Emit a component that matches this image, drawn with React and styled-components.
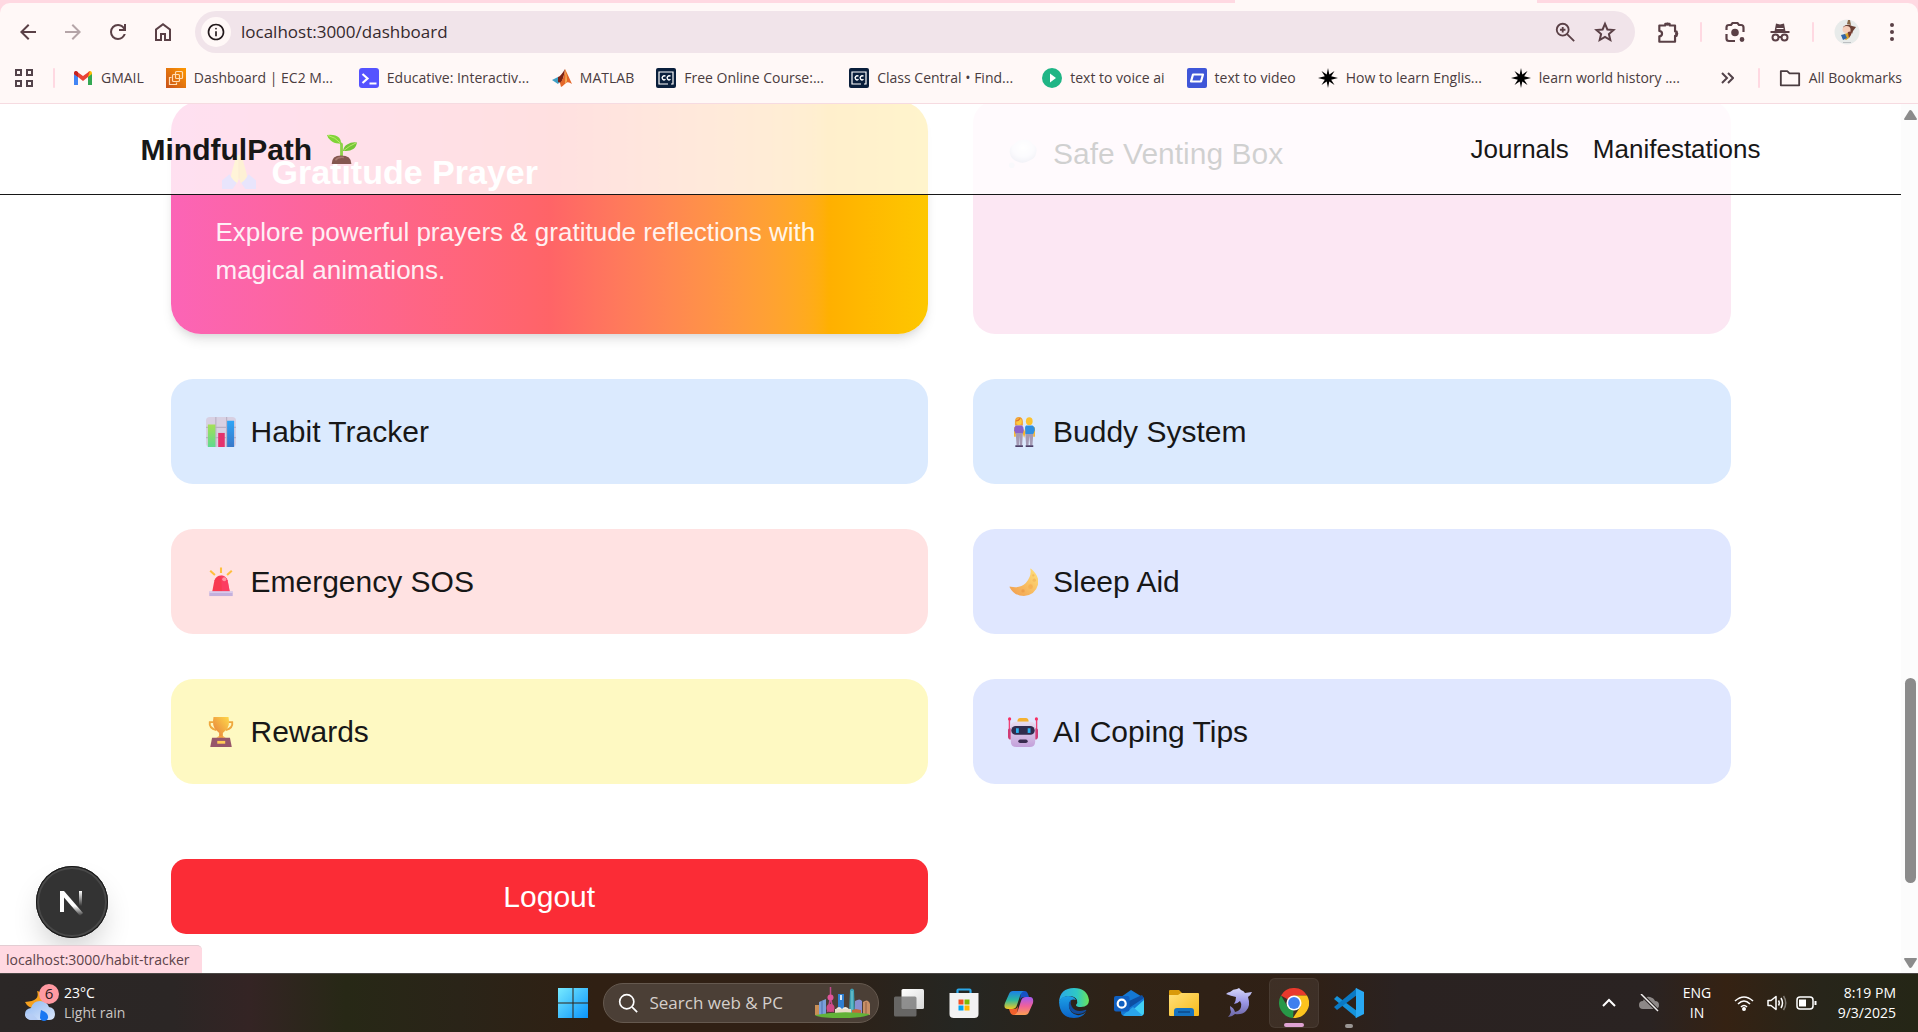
import styled, { createGlobalStyle, css } from 'styled-components';

const UI_FONT = "'Open Sans', 'Noto Sans', sans-serif";
const PAGE_FONT = "'Liberation Sans', Arial, sans-serif";
const CHROME_BG = '#fff8f7';
const CHROME_PINK = '#ffd9e2';
const CHROME_ICON = '#5a4046';
const INK = '#171717';

const GlobalStyle = createGlobalStyle`
  * {
    box-sizing: border-box;
  }
  body {
    margin: 0;
    overflow: hidden;
  }
  button, input {
    font: inherit;
    color: inherit;
    border: 0;
    padding: 0;
    margin: 0;
    background: none;
  }
  a {
    color: inherit;
    text-decoration: none;
  }
  svg {
    display: block;
    flex: none;
  }
`;

const Screen = styled.div`
  height: 100vh;
  display: flex;
  flex-direction: column;
  background: #fff;
`;

/* ---------- browser ---------- */

const BrowserHeader = styled.header`
  flex: none;
  background: ${CHROME_PINK};
  font-family: ${UI_FONT};
`;

const ActiveTab = styled.div`
  width: 302px;
  height: 3px;
  margin-left: 64.4%;
  background: ${CHROME_BG};
`;

const HeaderBody = styled.div`
  background: ${CHROME_BG};
  border-radius: 10px 10px 0 0;
  border-bottom: 1px solid #f6dbe1;
`;

const Toolbar = styled.div`
  display: flex;
  align-items: center;
  padding: 8px 4px 0 5px;
`;

const ToolButton = styled.button`
  width: ${(p) => p.$width || 45}px;
  height: 40px;
  display: flex;
  align-items: center;
  justify-content: center;
  color: ${(p) => (p.$dim ? '#b5a5a8' : CHROME_ICON)};
`;

const AddressBar = styled.div`
  flex: 1;
  height: 42px;
  margin: 0 10px;
  padding: 0 10px 0 6px;
  display: flex;
  align-items: center;
  border-radius: 21px;
  background: #f1e4ea;
`;

const SiteInfo = styled.button`
  width: 30px;
  height: 30px;
  display: flex;
  align-items: center;
  justify-content: center;
  border-radius: 50%;
  background: ${CHROME_BG};
  color: #22191b;
`;

const AddressInput = styled.input`
  flex: 1;
  min-width: 0;
  margin-left: 10px;
  font-size: 17px;
  line-height: 24px;
  color: #35292d;
  outline: none;
`;

const Separator = styled.span`
  flex: none;
  width: 2px;
  height: 20px;
  margin: 0 ${(p) => p.$space || 10}px;
  border-radius: 1px;
  background: ${CHROME_PINK};
`;

const BookmarkBar = styled.nav`
  height: 50px;
  display: flex;
  align-items: center;
  padding: 0 16px 0 12px;
  font-size: 14px;
  line-height: 20px;
  color: #4a3c40;
`;

const AppsButton = styled.button`
  width: 23px;
  height: 30px;
  display: flex;
  align-items: center;
  justify-content: center;
  color: #53434a;
`;

const Bookmark = styled.a`
  flex: none;
  display: flex;
  align-items: center;
  gap: 8px;
  white-space: nowrap;
  ${(p) => (p.$long ? css`width: 193px;` : css`padding-right: 22px;`)}
`;

const BarEnd = styled.div`
  margin-left: auto;
  display: flex;
  align-items: center;
`;

const AllBookmarks = styled.button`
  display: flex;
  align-items: center;
  gap: 8px;
  white-space: nowrap;
`;

/* ---------- page ---------- */

const Viewport = styled.div`
  position: relative;
  flex: 1;
  min-height: 0;
  display: flex;
  font-family: ${PAGE_FONT};
  color: ${INK};
`;

const Page = styled.div`
  position: relative;
  flex: 1;
  min-width: 0;
  overflow: hidden;
  display: flex;
  flex-direction: column;
  justify-content: flex-end;
`;

const SiteNav = styled.nav`
  position: absolute;
  top: 0;
  left: 0;
  right: 0;
  z-index: 10;
  background: rgba(255, 255, 255, 0.8);
  border-bottom: 1px solid ${INK};
`;

const NavInner = styled.div`
  max-width: 1680px;
  height: 90px;
  margin: 0 auto;
  padding: 0 30px;
  display: flex;
  align-items: center;
  justify-content: space-between;
`;

const Brand = styled.a`
  display: flex;
  align-items: center;
  gap: 10px;
  font-size: 30px;
  line-height: 45px;
  font-weight: 700;
`;

const NavLinks = styled.div`
  display: flex;
  gap: 24px;
  font-size: 26px;
  line-height: 38px;
`;

const Content = styled.main`
  width: 100%;
  max-width: 1680px;
  margin: 0 auto;
  padding: 0 60px 39px;
`;

const CardGrid = styled.div`
  display: grid;
  grid-template-columns: 1fr 1fr;
  gap: 45px;
`;

const Card = styled.a`
  display: flex;
  align-items: flex-start;
  gap: 10px;
  padding: 30px;
  border-radius: 22px;
  background: ${(p) => p.$bg};
  font-size: 30px;
  line-height: 45px;
`;

const PrayerCard = styled.a`
  display: block;
  padding: 45px;
  border-radius: 30px;
  color: #fff;
  background: linear-gradient(
    to right in oklab,
    oklch(71.8% 0.202 349.761),
    oklch(70.4% 0.191 22.216),
    oklch(85.2% 0.199 91.936)
  );
  box-shadow: 0 8px 12px -2px rgba(0, 0, 0, 0.1), 0 4px 8px -4px rgba(0, 0, 0, 0.1);
`;

const PrayerTitle = styled.h2`
  display: flex;
  align-items: center;
  gap: 10px;
  margin: 0 0 15px;
  font-size: 34px;
  line-height: 52px;
`;

const PrayerText = styled.p`
  margin: 0;
  font-size: 26px;
  line-height: 38px;
  opacity: 0.9;
`;

const EmojiBox = styled.span`
  flex: none;
  width: ${(p) => (p.$large ? 46 : 40)}px;
  height: ${(p) => (p.$large ? 52 : 45)}px;
  display: flex;
  align-items: center;
  justify-content: center;

  svg {
    width: ${(p) => (p.$large ? 34 : 30)}px;
    height: ${(p) => (p.$large ? 34 : 30)}px;
  }
`;

const LogoutButton = styled.button`
  margin-top: 30px;
  padding: 15px;
  border-radius: 15px;
  background: #fb2c36;
  color: #fff;
  font-size: 30px;
  line-height: 45px;
`;

const DevBadge = styled.button`
  position: absolute;
  left: 36px;
  bottom: 35px;
  z-index: 11;
  width: 72px;
  height: 72px;
  border-radius: 50%;
  background: #333;
  box-shadow: 0 0 0 1px #171717 inset, 0 0 0 3px #484848 inset, 0 16px 32px -8px rgba(0, 0, 0, 0.24);
  display: flex;
  align-items: center;
  justify-content: center;
`;

const StatusBubble = styled.div`
  position: absolute;
  left: 0;
  bottom: 0;
  z-index: 12;
  height: 28px;
  padding: 0 12px 0 6px;
  border-top: 1px solid #e3cdd3;
  border-top-right-radius: 5px;
  background: ${CHROME_PINK};
  color: #5c4349;
  font-family: ${UI_FONT};
  font-size: 14px;
  line-height: 27px;
`;

const ScrollBar = styled.div`
  flex: none;
  width: 17px;
  display: flex;
  flex-direction: column;
  align-items: center;
  padding: 6px 0 5px 2px;
  background: #fcfcfc;
`;

const ScrollSpace = styled.div`
  flex: ${(p) => p.$grow};
`;

const ScrollThumb = styled.div`
  flex: 205;
  width: 11px;
  border-radius: 6px;
  background: #8b8b8b;
`;

/* ---------- taskbar ---------- */

const Taskbar = styled.footer`
  flex: none;
  height: 59px;
  display: grid;
  grid-template-columns: 1fr auto 1fr;
  align-items: center;
  padding-left: 3px;
  border-top: 1px solid #4b4846;
  background: linear-gradient(
    to right,
    #2b2726 0%,
    #2b2625 9%,
    #342424 13%,
    #272816 18%,
    #2a2418 24%,
    #302013 31%,
    #302015 42%,
    #252622 50%,
    #2e2217 58%,
    #302015 68%,
    #2a2221 73%,
    #2a2322 86%,
    #352213 90%,
    #27251a 95%,
    #252616 100%
  );
  color: #fff;
  font-family: ${UI_FONT};
  font-size: 14px;
  line-height: 20px;
`;

const Weather = styled.button`
  justify-self: start;
  display: flex;
  align-items: center;
  gap: 4px;
  padding-left: 21px;
  text-align: left;
`;

const WeatherNote = styled.span`
  color: #c9c5c3;
`;

const Stack = styled.span`
  display: flex;
  flex-direction: column;
  text-align: ${(p) => p.$align || 'left'};
`;

const TaskCenter = styled.div`
  display: flex;
  align-items: center;
  gap: 5px;
`;

const TaskButton = styled.button`
  position: relative;
  width: 50px;
  height: 50px;
  display: flex;
  align-items: center;
  justify-content: center;
  border-radius: 6px;
  ${(p) =>
    p.$active &&
    css`
      background: rgba(255, 255, 255, 0.07);
      border: 1px solid rgba(255, 255, 255, 0.06);
    `}
`;

const RunMark = styled.span`
  position: absolute;
  bottom: 0;
  left: 50%;
  transform: translateX(-50%);
  width: ${(p) => (p.$active ? 20 : 8)}px;
  height: 4px;
  border-radius: 2px;
  background: ${(p) => (p.$active ? '#dfa3d3' : '#9a9694')};
`;

const TaskSearch = styled.label`
  width: 276px;
  height: 40px;
  display: flex;
  align-items: center;
  gap: 12px;
  padding: 0 7px 0 14px;
  border: 1px solid #65594f;
  border-radius: 20px;
  background: #4b3f36;

  input {
    flex: 1;
    min-width: 0;
    font-size: 17px;
    outline: none;
  }
  input::placeholder {
    color: #d5cfcb;
    opacity: 1;
  }
`;

const Tray = styled.div`
  justify-self: end;
  display: flex;
  align-items: center;
  padding-right: 22px;
`;

const TrayButton = styled.button`
  width: ${(p) => p.$width || 30}px;
  height: 40px;
  display: flex;
  align-items: center;
  justify-content: center;
`;

const Clock = styled.button`
  width: 72px;
  text-align: right;
`;

/* ---------- small icons ---------- */

const Sym = ({ d, size = 24 }) => (
  <svg width={size} height={size} viewBox="0 -960 960 960" fill="currentColor">
    <path d={d} />
  </svg>
);

const Line = ({ size = 24, width = 2, box = 24, children }) => (
  <svg
    width={size}
    height={size}
    viewBox={`0 0 ${box} ${box}`}
    fill="none"
    stroke="currentColor"
    strokeWidth={width}
  >
    {children}
  </svg>
);

const BACK = 'm313-440 224 224-57 56-320-320 320-320 57 56-224 224h487v80H313Z';
const FORWARD = 'M647-440H160v-80h487L423-744l57-56 320 320-320 320-57-56 224-224Z';
const RELOAD =
  'M480-160q-134 0-227-93t-93-227q0-134 93-227t227-93q69 0 132 28.5T720-690v-110h80v280H520v-80h168q-32-56-87.5-88T480-720q-100 0-170 70t-70 170q0 100 70 170t170 70q77 0 139-44t87-116h84q-28 106-114 173t-196 67Z';
const HOME =
  'M240-200h120v-240h240v240h120v-360L480-740 240-560v360Zm-80 80v-480l320-240 320 240v480H520v-240h-80v240H160Z';
const INFO =
  'M440-280h80v-240h-80v240Zm40-320q17 0 28.5-11.5T520-640q0-17-11.5-28.5T480-680q-17 0-28.5 11.5T440-640q0 17 11.5 28.5T480-600Zm0 520q-83 0-156-31.5T197-197q-54-54-85.5-127T80-480q0-83 31.5-156T197-763q54-54 127-85.5T480-880q83 0 156 31.5T763-763q54 54 85.5 127T880-480q0 83-31.5 156T763-197q-54 54-127 85.5T480-80Zm0-80q134 0 227-93t93-227q0-134-93-227t-227-93q-134 0-227 93t-93 227q0 134 93 227t227 93Z';

const ZoomIcon = () => (
  <Line size={22}>
    <circle cx="9.5" cy="9.5" r="6.5" />
    <path d="M14 14l8 8M9.5 6.5v6M6.5 9.5h6" />
  </Line>
);

const StarIcon = () => (
  <Line size={24}>
    <path d="M12 3.8l2.4 5.7 6.1.5-4.6 4 1.4 6-5.3-3.2L6.700 20l1.400-6-4.600-4 6.100-.5z" />
  </Line>
);

const ExtensionIcon = () => (
  <Line size={26}>
    <path d="M4 6h5.500V4.500h4V6h5v5.500H20v4h-1.500V21H4v-5q2.500-.3 2.500-2.500T4 11z" strokeLinejoin="round" />
    <circle cx="11.5" cy="4.800" r="1.500" fill="currentColor" stroke="none" />
    <circle cx="20" cy="13.5" r="1.500" fill="currentColor" stroke="none" />
  </Line>
);

const LensIcon = () => (
  <Line size={24} width={2.2}>
    <path d="M3.5 10V7.500Q3.500 5 6 5h2l1.500-2h5L16 5h2q2.500 0 2.500 2.500V12M3.500 14v4.500Q3.500 21 6 21h6" />
    <circle cx="12" cy="12.5" r="2.700" fill="currentColor" />
    <circle cx="19" cy="19.5" r="1.300" fill="currentColor" />
  </Line>
);

const IncognitoIcon = () => (
  <Line size={24}>
    <path d="M2.500 12h19" />
    <path d="M6.500 11.500l1.500-8 4 1 4-1 1.500 8z" fill="currentColor" stroke="none" />
    <path d="M8.500 8.500h7" stroke={CHROME_BG} strokeWidth="1" />
    <circle cx="7.500" cy="17.500" r="3" />
    <circle cx="16.500" cy="17.500" r="3" />
    <path d="M10.500 17h3" />
  </Line>
);

const Avatar = () => (
  <svg width="26" height="26" viewBox="0 0 26 26">
    <circle cx="13" cy="13" r="12.5" fill="#e8ebea" />
    <path d="M9 8q4-4 9-1l4 1-3 4-1 3-3-6-5 2z" fill="#6b3f33" />
    <path d="M13 5l1-4h2l1 5z" fill="#8a6a4a" />
    <ellipse cx="12.5" cy="10.5" rx="4" ry="3.500" fill="#f6cdb9" />
    <path d="M14 13l4-1-1 4-2 3-3-1z" fill="#7a3c30" />
    <path d="M10 15l4-1 1 5-3 2-3-2z" fill="#d9a32c" />
    <path d="M7 16l4-1 2 4-4 2z" fill="#2f65a8" />
    <path d="M9 23.500h8" stroke="#bcbfc2" />
  </svg>
);

const MenuIcon = () => (
  <svg width="6" height="22" viewBox="0 0 6 22" fill="currentColor">
    <circle cx="3" cy="4" r="2" />
    <circle cx="3" cy="11" r="2" />
    <circle cx="3" cy="18" r="2" />
  </svg>
);

const AppsIcon = () => (
  <Line size={20} box={20}>
    <path d="M2 2h5v5H2zM13 2h5v5h-5zM2 13h5v5H2zM13 13h5v5h-5z" />
  </Line>
);

const GmailIcon = () => (
  <svg width="20" height="20" viewBox="0 0 20 20">
    <path d="M1 5v12h4V8z" fill="#4285f4" />
    <path d="M19 5v12h-4V8z" fill="#34a853" />
    <path d="M15 4l2-1q2 0 2 3l-4 3z" fill="#fbbc04" />
    <path d="M1 6q0-3 2-3l7 5 7-5-2 6-5 4-5-4z" fill="#ea4335" />
    <path d="M1 6q0-3 2-3l2 1v5z" fill="#c5221f" />
  </svg>
);

const AwsIcon = () => (
  <svg width="20" height="20" viewBox="0 0 20 20">
    <defs>
      <linearGradient id="aws" x1="0" y1="1" x2="1" y2="0">
        <stop offset="0" stopColor="#c8511b" />
        <stop offset="1" stopColor="#f90" />
      </linearGradient>
    </defs>
    <path d="M0 0h20v20H0z" fill="url(#aws)" />
    <g fill="none" stroke="#ffdcb4" strokeWidth="1.2">
      <rect x="9.5" y="3.5" width="7" height="7" rx="1" />
      <rect x="6.5" y="6.5" width="7" height="7" rx="1" />
      <path d="M5.5 9.500h-2v7h7v-2" />
    </g>
  </svg>
);

const EducativeIcon = () => (
  <svg width="20" height="20" viewBox="0 0 20 20">
    <rect width="20" height="20" rx="3" fill="#5553ff" />
    <path d="M3.500 6l5 4.500-5 4.500M10.500 15.500h7" fill="none" stroke="#fff" strokeWidth="2.2" />
  </svg>
);

const MatlabIcon = () => (
  <svg width="20" height="20" viewBox="0 0 20 20">
    <path d="M0 12l6-3 3 3-3 4z" fill="#3f9fc4" />
    <path d="M6 9q3-1 7-8-1 9-4 14l-3-1z" fill="#7a2416" />
    <path d="M13 1q3 6 7 15-4-3-6-1-3 3-5 4l-1-4q4-4 5-14z" fill="#e4672a" />
    <path d="M13 1q2 6 2 12l-2 3q1-8 0-15z" fill="#f8b65a" />
  </svg>
);

const ClassCentralIcon = () => (
  <svg width="20" height="20" viewBox="0 0 20 20">
    <rect width="20" height="20" rx="2" fill="#0a1f3c" />
    <path d="M12 16H3V4h14v12h-2" fill="none" stroke="#fff" strokeWidth="1.2" />
    <path d="M9.500 8.300a2 2 0 1 0 0 3M14.500 8.300a2 2 0 1 0 0 3" fill="none" stroke="#fff" strokeWidth="1.4" />
  </svg>
);

const VoiceIcon = () => (
  <svg width="20" height="20" viewBox="0 0 20 20">
    <circle cx="10" cy="10" r="10" fill="#1fb585" />
    <path d="M8 5.500l6 4.500-6 4.500z" fill="#fff" />
  </svg>
);

const VideoIcon = () => (
  <svg width="20" height="20" viewBox="0 0 20 20">
    <rect width="20" height="20" rx="2" fill="#3f56d8" />
    <path d="M6 6.500h10l-2 7H4z" fill="none" stroke="#fff" strokeWidth="2.2" strokeLinejoin="round" />
  </svg>
);

const BurstIcon = () => (
  <svg width="20" height="20" viewBox="0 0 20 20" fill="#000">
    <path d="M10 0l1.300 6.500L16.500 3l-3.300 5.200L20 10l-6.800 1.800L16.500 17l-5.200-3.500L10 20l-1.300-6.500L3.500 17l3.300-5.200L0 10l6.800-1.800L3.500 3l5.200 3.500z" />
  </svg>
);

const FolderOutline = () => (
  <Line size={22}>
    <path d="M2 4.500h7L11.500 7H22v13H2z" strokeLinejoin="round" />
  </Line>
);

/* ---------- emoji drawings ---------- */

const Art = ({ label, children }) => (
  <svg viewBox="0 0 32 32" role="img" aria-label={label}>
    {children}
  </svg>
);

const Sprout = () => (
  <Art label="seedling">
    <path d="M15 9q2 0 2 3v12h-3V12q0-2-1-3z" fill="#8fd14a" />
    <path d="M0 1q9-1 13 3 2 2 2 6-7 1-11-3Q1 5 0 1z" fill="#7fd436" />
    <path d="M32 9q-6-1-10 2-4 2-5 7 7 1 11-2 3-2 4-7z" fill="#74c636" />
    <path d="M1 1.500q8 2 13 8M31 9.500q-7 3-13 8" stroke="#bfea6d" fill="none" />
    <path d="M5 32q0-9 10-9 11 0 11 9z" fill="#85564f" />
    <path d="M9 28q3-4 9-3" stroke="#a87a70" strokeWidth="1.5" fill="none" />
  </Art>
);

const Prayer = () => (
  <Art label="folded hands">
    <path d="M16 0q-4 0-4 6L9 17l-1 6 6 4 2-5z" fill="#ffc83d" />
    <path d="M16 0q4 0 4 6l3 11 1 6-6 4-2-5z" fill="#fbb92f" />
    <path d="M16 3v19" stroke="#e69b2a" />
    <path d="M0 24l7-6q4 7 7 8l-4 6H0z" fill="#8a7df0" />
    <path d="M32 24l-7-6q-4 7-7 8l4 6h10z" fill="#8a7df0" />
  </Art>
);

const Cloud = () => (
  <Art label="thought balloon">
    <defs>
      <radialGradient id="puff" cx=".5" cy=".35" r=".65">
        <stop offset="0" stopColor="#fff" />
        <stop offset=".6" stopColor="#eceaf6" />
        <stop offset="1" stopColor="#bcbdd8" />
      </radialGradient>
    </defs>
    <path d="M16 1q7-1 10 4 6 3 4 10-1 6-7 8-6 4-13 1-7-2-8-9Q1 8 7 5q3-4 9-4z" fill="url(#puff)" />
    <circle cx="4" cy="28" r="3" fill="#e0deee" />
  </Art>
);

const Chart = () => (
  <Art label="bar chart">
    <defs>
      <linearGradient id="barGreen" x1="0" y1="0" x2="0" y2="1">
        <stop offset="0" stopColor="#a5e055" />
        <stop offset="1" stopColor="#5fd990" />
      </linearGradient>
      <linearGradient id="barBlue" x1="0" y1="0" x2="0" y2="1">
        <stop offset="0" stopColor="#2ea5f7" />
        <stop offset="1" stopColor="#3a78c9" />
      </linearGradient>
    </defs>
    <rect width="32" height="32" rx="4" fill="#d8d0e2" />
    <path d="M0 11h32M0 22h32M10.500 0v32M22 0v32" stroke="#b9b0c4" strokeWidth="1.2" />
    <path d="M2 8h8v24H2z" fill="url(#barGreen)" />
    <path d="M13 17h7v15h-7z" fill="#e5326c" />
    <path d="M22.500 4H30v28h-7.500z" fill="url(#barBlue)" />
  </Art>
);

const Buddies = () => (
  <Art label="couple">
    <g transform="translate(4 0) scale(.85 1)">
      <path d="M4 5q0-5 5-5t5 5v4H4z" fill="#f0a33a" />
      <circle cx="9" cy="5" r="3.5" fill="#ffcb3f" />
      <circle cx="22" cy="4.5" r="4.2" fill="#fcc22f" />
      <path d="M5.500 4Q9 4 10.500 1.500" stroke="#e0762f" strokeWidth="1.5" fill="none" />
      <path d="M4 11v10M28 11v10M13 12l2.500 7L18 12" fill="none" stroke="#f7b52c" strokeWidth="2.2" />
      <path d="M5 9h8q2 1 2 5l-1 4H5l-2-4q0-4 2-5z" fill="#8c62c9" />
      <path d="M18 9h8q3 1 3 5l-2 4H17v-4q-1-4 1-5z" fill="#2f8fe0" />
      <path d="M5 17h9l-1 13h-3l-.5-10L9 30H6z" fill="#a49ab4" />
      <path d="M17 18h10l-1 12h-3l-1-10-1 10h-3z" fill="#a49ab4" />
      <path d="M4.500 31H14M17.500 31H27" stroke="#4d4068" strokeWidth="2" />
    </g>
  </Art>
);

const Siren = () => (
  <Art label="police light">
    <path d="M4.500 4l5 4.500M16 .5v6M27.500 4l-5 4.500" stroke="#ffbf3d" strokeWidth="2.2" />
    <path d="M6.500 27L9 14q2-5 7-5t7 5l2.500 13z" fill="#f83a50" />
    <path d="M16 9q5 0 7 5l2.500 13H17z" fill="#ff3f6b" opacity=".6" />
    <circle cx="19.5" cy="13" r="2.2" fill="#ff93a0" />
    <path d="M3.500 26h25v5h-25z" fill="#c3b0dd" />
    <path d="M3.500 26h25v1.500h-25z" fill="#ded0ee" />
  </Art>
);

const Moon = () => (
  <Art label="crescent moon">
    <defs>
      <linearGradient id="moon" x1="1" y1="0" x2="0" y2="1">
        <stop offset="0" stopColor="#ffe27a" />
        <stop offset="1" stopColor="#f19a4c" />
      </linearGradient>
    </defs>
    <path d="M25 2q9 8 7 17-3 11-15 12Q7 31 2 22q-1-2 1-1 10 2 16-4 6-7 5-14-1-2 1-1z" fill="url(#moon)" />
    <circle cx="24" cy="21" r="2.5" fill="#f6b255" />
    <circle cx="28" cy="14" r="1.8" fill="#f4bb5e" />
    <circle cx="16" cy="25.5" r="1.8" fill="#ee9f4a" />
    <circle cx="27" cy="9" r="1.2" fill="#f4bb5e" />
  </Art>
);

const Trophy = () => (
  <Art label="trophy">
    <defs>
      <linearGradient id="cup" x1="0" y1="1" x2="1" y2="0">
        <stop offset="0" stopColor="#e5793a" />
        <stop offset="1" stopColor="#ffd84a" />
      </linearGradient>
    </defs>
    <path d="M8 5.500H4Q3 12 11 14M24 5.500h4q1 6.500-7 8.500" fill="none" stroke="#efa83e" strokeWidth="2" />
    <path d="M8 0h16q2 10-3 14l-3 3v5h-4v-5l-3-3Q6 10 8 0z" fill="url(#cup)" />
    <path d="M11 22q5-4 10 0z" fill="#f7a43c" />
    <path d="M6.500 22h19l2 10h-23z" fill="#96566a" />
    <path d="M12 25.500h8.500v3H12z" fill="#ffcb57" />
  </Art>
);

const Robot = () => (
  <Art label="robot">
    <defs>
      <linearGradient id="face" x1="0" y1="0" x2="0" y2="1">
        <stop offset="0" stopColor="#e7dcf0" />
        <stop offset="1" stopColor="#c3a0da" />
      </linearGradient>
    </defs>
    <path d="M1.500 2v19M30.500 2v19" stroke="#ef4277" strokeWidth="1.5" />
    <circle cx="1.7" cy="2" r="1.7" fill="#f62e63" />
    <circle cx="30.3" cy="2" r="1.7" fill="#f62e63" />
    <path d="M0 14q0-2 3-2v12q-3 0-3-3zM32 14q0-2-3-2v12q3 0 3-3z" fill="#d03c76" />
    <path d="M10 5q0-4 3-4h6q3 0 3 4z" fill="#f5b131" />
    <path d="M3 10q0-5 5-5h16q5 0 5 5v16q0 6-6 6H9q-6 0-6-6z" fill="url(#face)" />
    <rect x="3.5" y="9.5" width="25" height="9.5" rx="4.7" fill="#302b4c" />
    <rect x="8.5" y="12" width="3" height="5" fill="#2bb1f0" />
    <rect x="21" y="12" width="3" height="5" fill="#2bb1f0" />
    <rect x="11" y="24" width="10" height="3.8" rx="1.9" fill="#382b4e" />
  </Art>
);

/* ---------- taskbar drawings ---------- */

const WeatherIcon = () => (
  <svg width="36" height="40" viewBox="0 0 36 40">
    <defs>
      <linearGradient id="wcloud" x1="0" y1="0" x2="1" y2="1">
        <stop offset="0" stopColor="#8fb8f2" />
        <stop offset="1" stopColor="#dbe7fb" />
      </linearGradient>
    </defs>
    <path d="M13 8q4 10-12 11 3 6 9 6l10-7q-3-4-2-7-2-3-5-3z" fill="#f5a11f" />
    <path d="M7 37q-6-1-6-6t6-6q2-7 9-7t9 6q6 1 6 7t-6 6z" fill="url(#wcloud)" />
    <path d="M7 37q-6-1-6-6 8-2 13 6z" fill="#b5cdf5" />
    <path d="M17 27q8 3 7 8-1 3-4 3t-4-3q0-4 1-8z" fill="#1a78f2" />
    <circle cx="25" cy="11" r="10" fill="#ff9aa2" />
    <text x="25" y="16" textAnchor="middle" fontSize="15" fill="#2b1a1c">6</text>
  </svg>
);

const StartIcon = () => (
  <svg width="30" height="30" viewBox="0 0 30 30">
    <defs>
      <linearGradient id="start" x1="0" y1="0" x2="30" y2="30" gradientUnits="userSpaceOnUse">
        <stop offset="0" stopColor="#77eaff" />
        <stop offset="1" stopColor="#0a94fb" />
      </linearGradient>
    </defs>
    <path d="M0 0h14.500v14.500H0zM15.500 0H30v14.500H15.500zM0 15.500h14.500V30H0zM15.500 15.500H30V30H15.500z" fill="url(#start)" />
  </svg>
);

const CityIcon = () => (
  <svg width="57" height="32" viewBox="0 0 57 32">
    <path d="M1 18h4v10H1z" fill="#c98f56" />
    <path d="M5 15l7-3v16H5z" fill="#7ba0d8" />
    <path d="M8 14v14" stroke="#4a6fae" />
    <path d="M41 14q5-3 7 0v14h-7z" fill="#8a8fd0" />
    <path d="M49 15q5-4 7 2v11h-7z" fill="#c98f66" />
    <path d="M52 15v13" stroke="#8f5d43" />
    <path d="M24 7h6v21h-6z" fill="#2f7fd1" />
    <path d="M26 8h2v5h-2z" fill="#d7e7f5" />
    <path d="M36 3q2-3 4 0l1 25h-6z" fill="#3d9fb4" />
    <path d="M38 4v22" stroke="#7fd0d6" />
    <path d="M16.500 0v10M13.500 25l3-14 3 14" stroke="#c04a8b" strokeWidth="1.5" fill="none" />
    <circle cx="16.5" cy="10.5" r="3" fill="#e0559b" />
    <circle cx="16.5" cy="21" r="4" fill="#d04a86" />
    <path d="M21 22h16v5H21z" fill="#e8dcc8" />
    <path d="M22 22q3-4 6 0 3-4 7 0z" fill="#f0ece2" />
    <path d="M38 23l4-1 5 1v4h-9z" fill="#c46a3a" />
    <path d="M1 28q27-5 55-1-5 4-28 4-25 0-27-3z" fill="#62b238" />
  </svg>
);

const TaskViewIcon = () => (
  <svg width="30" height="30" viewBox="0 0 30 30">
    <defs>
      <linearGradient id="tv" x1="0" y1="0" x2="1" y2="1">
        <stop offset="0" stopColor="#fff" />
        <stop offset="1" stopColor="#d8d8d8" />
      </linearGradient>
    </defs>
    <rect x="7.5" y="1" width="22.5" height="20" rx="1.5" fill="url(#tv)" />
    <rect y="8.5" width="22.5" height="20" rx="1.5" fill="#777" opacity=".8" />
  </svg>
);

const StoreIcon = () => (
  <svg width="30" height="30" viewBox="0 0 30 30">
    <path d="M8.500 6V2.500q0-1 1-1h11q1 0 1 1V6" fill="none" stroke="#2aa7e8" strokeWidth="2.2" />
    <path d="M.5 5h29v21q0 4-4 4h-21q-4 0-4-4z" fill="#f2f2f2" />
    <path d="M9.500 11.500h5v5h-5z" fill="#f25022" />
    <path d="M15.500 11.500h5v5h-5z" fill="#7fba00" />
    <path d="M9.500 17.500h5v5h-5z" fill="#00a4ef" />
    <path d="M15.500 17.500h5v5h-5z" fill="#ffb900" />
  </svg>
);

const CopilotIcon = () => (
  <svg width="30" height="28" viewBox="0 0 30 28">
    <defs>
      <linearGradient id="cpA" x1="0" y1="0" x2="0" y2="1">
        <stop offset="0" stopColor="#1b7fe8" />
        <stop offset=".5" stopColor="#2cb8a0" />
        <stop offset="1" stopColor="#f3c822" />
      </linearGradient>
      <linearGradient id="cpB" x1="0" y1="0" x2="0" y2="1">
        <stop offset="0" stopColor="#a35bf2" />
        <stop offset=".5" stopColor="#f0609a" />
        <stop offset="1" stopColor="#fba052" />
      </linearGradient>
    </defs>
    <path d="M17 2h4q2 0 3 3l1 3h-5q-3 0-4 3z" fill="#1553c4" />
    <path d="M13 26H9q-2 0-3-3l-1-3h5q3 0 4-3z" fill="#f0602c" />
    <path d="M9 2h11q-3 1-4 5l-3 9q-1 4-5 4H4q-5 0-3-6L5 5q1-3 4-3z" fill="url(#cpA)" />
    <path d="M21 26H10q3-1 4-5l3-9q1-4 5-4h4q4 0 3 6l-4 9q-1 3-4 3z" fill="url(#cpB)" />
  </svg>
);

const EdgeIcon = () => (
  <svg width="30" height="30" viewBox="0 0 30 30">
    <defs>
      <linearGradient id="edA" x1="0" y1="0" x2="1" y2="0">
        <stop offset="0" stopColor="#2aa8e8" />
        <stop offset=".6" stopColor="#2fc9c4" />
        <stop offset="1" stopColor="#6be35a" />
      </linearGradient>
      <linearGradient id="edB" x1="0" y1="0" x2="0" y2="1">
        <stop offset="0" stopColor="#1ca0e6" />
        <stop offset="1" stopColor="#0b63c8" />
      </linearGradient>
    </defs>
    <path d="M0 14Q1 0 15 0q13 0 15 12 0 7-8 7-5 0-5-2 2-2 1-5-2-4-8-4-7 0-10 6z" fill="url(#edA)" />
    <path d="M0 14q2-6 9-6 6 0 8 4-6-2-7 5 0 8 8 10 5 1 9-3-4 6-12 6Q1 30 0 14z" fill="url(#edB)" />
    <path d="M12 12q-3 3-2 7 2 7 9 7 5 0 8-3 1-2-1-1-9 3-13-3-2-3-1-7z" fill="#134c9c" />
  </svg>
);

const OutlookIcon = () => (
  <svg width="30" height="28" viewBox="0 0 30 28">
    <path d="M7 8l10-7 13 8v14q0 4-4 4H11q-4 0-4-4z" fill="#1478d4" />
    <path d="M15 12l13-6 2 3-15 10z" fill="#0d4fa3" />
    <path d="M30 11v12q0 4-4 4H12l18-16z" fill="#42d0f5" />
    <path d="M9 26l10-8 9 8q-1 1-3 1H12q-2 0-3-1z" fill="#2aa4ea" />
    <rect y="7" width="15.5" height="15.5" rx="2" fill="#0f5fc0" />
    <circle cx="7.7" cy="14.7" r="4" fill="none" stroke="#fff" strokeWidth="2.2" />
  </svg>
);

const ExplorerIcon = () => (
  <svg width="30" height="28" viewBox="0 0 30 28">
    <defs>
      <linearGradient id="fold" x1="0" y1="0" x2="1" y2="1">
        <stop offset="0" stopColor="#ffe07a" />
        <stop offset="1" stopColor="#f8ba1a" />
      </linearGradient>
    </defs>
    <path d="M0 2q0-1 1-1h9l3 3v3H0z" fill="#d99a0a" />
    <path d="M0 6h9l3-2h17q1 0 1 1v21q0 1-1 1H1q-1 0-1-1z" fill="url(#fold)" />
    <path d="M5 27v-5q0-3 3-3h14q3 0 3 3v5z" fill="#1572c0" />
    <path d="M9 23h12" stroke="#0c4a8a" strokeWidth="1.5" />
  </svg>
);

const DolphinIcon = () => (
  <svg width="26" height="30" viewBox="0 0 26 30">
    <defs>
      <linearGradient id="dol" x1="0" y1="0" x2="0" y2="1">
        <stop offset="0" stopColor="#d6d8fb" />
        <stop offset=".5" stopColor="#9a96e6" />
        <stop offset="1" stopColor="#6a64a0" />
      </linearGradient>
    </defs>
    <path d="M0 6q2-2 4-2 3-3 7-3l2-1 2 2q3 1 4 3l7-1q-1 3-4 5 3 9-2 14-4 4-11 3-3 3-7 3 2-2 3-5-1-3-1-6 4 2 5 6 5-1 6-5 1-3-1-6-3 3-6 3 2-3 2-7-5-1-10-3z" fill="url(#dol)" />
  </svg>
);

const ChromeIcon = () => (
  <svg width="30" height="30" viewBox="0 0 30 30">
    <path d="M15 15L2 7.500A15 15 0 0 1 28 7.500H15z" fill="#e8392c" />
    <path d="M15 15l-1 15A15 15 0 0 1 2 7.500l6.500 11z" fill="#279847" />
    <path d="M15 7.500h13A15 15 0 0 1 14 30l7.500-11.500z" fill="#fcc31e" />
    <circle cx="15" cy="15" r="7.5" fill="#fff" />
    <circle cx="15" cy="15" r="5.9" fill="#3f7fee" />
  </svg>
);

const CodeIcon = () => (
  <svg width="30" height="30" viewBox="0 0 30 30">
    <path d="M0 11l3-3 20 15v7z" fill="#1592da" />
    <path d="M0 19l3 3L23 7V0z" fill="#0a79c4" />
    <path d="M22 0l8 4v22l-8 4q-1-1 0-2V2q-1-1 0-2z" fill="#29a8f3" />
  </svg>
);

const NextMark = () => (
  <svg width="30" height="30" viewBox="0 0 30 30">
    <defs>
      <linearGradient id="nDiag" x1="0" y1="0" x2="0" y2="1">
        <stop offset=".6" stopColor="#fff" />
        <stop offset="1" stopColor="#fff" stopOpacity="0" />
      </linearGradient>
      <linearGradient id="nBar" x1="0" y1="0" x2="0" y2="1">
        <stop offset="0" stopColor="#fff" />
        <stop offset="1" stopColor="#fff" stopOpacity="0" />
      </linearGradient>
    </defs>
    <path d="M3 4h4v21H3z" fill="#fff" />
    <path d="M3 4h4l19 22-3 3L4 7z" fill="url(#nDiag)" />
    <path d="M22 4h3v15h-3z" fill="url(#nBar)" />
  </svg>
);

const bookmarks = [
  { title: 'GMAIL', icon: <GmailIcon /> },
  { title: 'Dashboard | EC2 M...', icon: <AwsIcon />, long: true },
  { title: 'Educative: Interactiv...', icon: <EducativeIcon />, long: true },
  { title: 'MATLAB', icon: <MatlabIcon /> },
  { title: 'Free Online Course:...', icon: <ClassCentralIcon />, long: true },
  { title: 'Class Central • Find...', icon: <ClassCentralIcon />, long: true },
  { title: 'text to voice ai', icon: <VoiceIcon /> },
  { title: 'text to video', icon: <VideoIcon /> },
  { title: 'How to learn Englis...', icon: <BurstIcon />, long: true },
  { title: 'learn world history ....', icon: <BurstIcon />, long: true },
];

const cards = [
  { title: 'Safe Venting Box', bg: '#fce7f3', icon: <Cloud /> },
  { title: 'Habit Tracker', bg: '#dbeafe', icon: <Chart /> },
  { title: 'Buddy System', bg: '#dbeafe', icon: <Buddies /> },
  { title: 'Emergency SOS', bg: '#ffe2e2', icon: <Siren /> },
  { title: 'Sleep Aid', bg: '#e0e7ff', icon: <Moon /> },
  { title: 'Rewards', bg: '#fef9c2', icon: <Trophy /> },
  { title: 'AI Coping Tips', bg: '#e0e7ff', icon: <Robot /> },
];

const apps = [
  { name: 'Task view', icon: <TaskViewIcon /> },
  { name: 'Store', icon: <StoreIcon /> },
  { name: 'Copilot', icon: <CopilotIcon /> },
  { name: 'Edge', icon: <EdgeIcon /> },
  { name: 'Outlook', icon: <OutlookIcon /> },
  { name: 'File Explorer', icon: <ExplorerIcon /> },
  { name: 'Dolphin', icon: <DolphinIcon /> },
  { name: 'Chrome', icon: <ChromeIcon />, running: true, active: true },
  { name: 'Code', icon: <CodeIcon />, running: true },
];

const Browser = () => (
  <BrowserHeader>
    <ActiveTab />
    <HeaderBody>
      <Toolbar>
        <ToolButton aria-label="Back"><Sym d={BACK} /></ToolButton>
        <ToolButton aria-label="Forward" $dim><Sym d={FORWARD} /></ToolButton>
        <ToolButton aria-label="Reload"><Sym d={RELOAD} /></ToolButton>
        <ToolButton aria-label="Home"><Sym d={HOME} /></ToolButton>
        <AddressBar>
          <SiteInfo aria-label="Site information"><Sym d={INFO} size={20} /></SiteInfo>
          <AddressInput aria-label="Address" defaultValue="localhost:3000/dashboard" />
          <ToolButton aria-label="Zoom" $width={40}><ZoomIcon /></ToolButton>
          <ToolButton aria-label="Bookmark this page" $width={40}><StarIcon /></ToolButton>
        </AddressBar>
        <ToolButton aria-label="Extensions"><ExtensionIcon /></ToolButton>
        <Separator />
        <ToolButton aria-label="Lens"><LensIcon /></ToolButton>
        <ToolButton aria-label="Incognito"><IncognitoIcon /></ToolButton>
        <Separator />
        <ToolButton aria-label="Profile"><Avatar /></ToolButton>
        <ToolButton aria-label="Menu"><MenuIcon /></ToolButton>
      </Toolbar>
      <BookmarkBar>
        <AppsButton aria-label="Apps"><AppsIcon /></AppsButton>
        <Separator $space={18} />
        {bookmarks.map((b) => (
          <Bookmark key={b.title} href="#" $long={b.long}>
            {b.icon}
            {b.title}
          </Bookmark>
        ))}
        <BarEnd>
          <AppsButton aria-label="More bookmarks">
            <Line size={14} box={14}>
              <path d="M2 2l5 5-5 5M8 2l5 5-5 5" />
            </Line>
          </AppsButton>
          <Separator $space={19} />
          <AllBookmarks><FolderOutline />All Bookmarks</AllBookmarks>
        </BarEnd>
      </BookmarkBar>
    </HeaderBody>
  </BrowserHeader>
);

const Dashboard = () => (
  <Page>
    <SiteNav>
      <NavInner>
        <Brand href="#">
          MindfulPath
          <EmojiBox><Sprout /></EmojiBox>
        </Brand>
        <NavLinks>
          <a href="#">Journals</a>
          <a href="#">Manifestations</a>
        </NavLinks>
      </NavInner>
    </SiteNav>
    <Content>
      <CardGrid>
        <PrayerCard href="#">
          <PrayerTitle>
            <EmojiBox $large><Prayer /></EmojiBox>
            Gratitude Prayer
          </PrayerTitle>
          <PrayerText>
            Explore powerful prayers &amp; gratitude reflections with magical animations.
          </PrayerText>
        </PrayerCard>
        {cards.map((c) => (
          <Card key={c.title} href="#" $bg={c.bg}>
            <EmojiBox>{c.icon}</EmojiBox>
            {c.title}
          </Card>
        ))}
        <LogoutButton>Logout</LogoutButton>
      </CardGrid>
    </Content>
    <DevBadge aria-label="Dev tools"><NextMark /></DevBadge>
    <StatusBubble>localhost:3000/habit-tracker</StatusBubble>
  </Page>
);

const WindowsBar = () => (
  <Taskbar>
    <Weather>
      <WeatherIcon />
      <Stack>
        <span>23°C</span>
        <WeatherNote>Light rain</WeatherNote>
      </Stack>
    </Weather>
    <TaskCenter>
      <TaskButton aria-label="Start"><StartIcon /></TaskButton>
      <TaskSearch>
        <Line size={20}>
          <circle cx="10.5" cy="10.5" r="8.5" />
          <path d="M17 17l6 6" />
        </Line>
        <input aria-label="Search" placeholder="Search web & PC" />
        <CityIcon />
      </TaskSearch>
      {apps.map((a) => (
        <TaskButton key={a.name} aria-label={a.name} $active={a.active}>
          {a.icon}
          {a.running && <RunMark $active={a.active} />}
        </TaskButton>
      ))}
    </TaskCenter>
    <Tray>
      <TrayButton aria-label="Hidden icons" $width={34}>
        <Line size={16} box={16}>
          <path d="M2 11l6-6 6 6" />
        </Line>
      </TrayButton>
      <TrayButton aria-label="OneDrive" $width={46}>
        <svg width="22" height="18" viewBox="0 0 22 18">
          <path d="M5 15q-4 0-4-4t4-4q2-5 7-4 4 1 5 4 4 0 4 4t-4 4z" fill="#8d8887" />
          <path d="M3 0l17 17" stroke="#2a2322" strokeWidth="3.5" />
          <path d="M3 0l17 17" stroke="#f2f0ef" strokeWidth="1.5" />
        </svg>
      </TrayButton>
      <TrayButton aria-label="Language" $width={50}>
        <Stack $align="center">
          <span>ENG</span>
          <span>IN</span>
        </Stack>
      </TrayButton>
      <TrayButton aria-label="Network" $width={44}>
        <Line size={20} box={20} width={1.6}>
          <path d="M1 8q9-8 18 0M4 11q6-6 12 0M7 14q3-3 6 0" />
          <circle cx="10" cy="16" r="1.2" fill="currentColor" />
        </Line>
      </TrayButton>
      <TrayButton aria-label="Volume" $width={22}>
        <Line size={20} box={20} width={1.5}>
          <path d="M1 7.500h3l5-4v13l-5-4H1z" strokeLinejoin="round" />
          <path d="M11.500 7.500q1.500 2.500 0 5M14 5q3 5 0 10" />
          <path d="M16.500 3q4.500 7 0 14" opacity=".4" />
        </Line>
      </TrayButton>
      <TrayButton aria-label="Battery" $width={36}>
        <svg width="21" height="14" viewBox="0 0 21 14">
          <rect x="1" y="1" width="16" height="12" rx="3" fill="none" stroke="#fff" strokeWidth="1.5" />
          <path d="M3 3.500h7v7H3z" fill="#fff" />
          <path d="M18.500 5h2v4h-2z" fill="#fff" />
        </svg>
      </TrayButton>
      <Clock>
        <Stack $align="right">
          <span>8:19 PM</span>
          <span>9/3/2025</span>
        </Stack>
      </Clock>
    </Tray>
  </Taskbar>
);

const App = () => (
  <>
    <GlobalStyle />
    <Screen>
      <Browser />
      <Viewport>
        <Dashboard />
        <ScrollBar>
          <svg width="13" height="10" viewBox="0 0 13 10" fill="#8b8b8b">
            <path d="M5 1q1-2 3 0l5 8q0 1-1 1H1q-1 0-1-1z" />
          </svg>
          <ScrollSpace $grow={558} />
          <ScrollThumb />
          <ScrollSpace $grow={75} />
          <svg width="13" height="10" viewBox="0 0 13 10" fill="#8b8b8b">
            <path d="M5 9q1 2 3 0l5-8q0-1-1-1H1Q0 0 0 1z" />
          </svg>
        </ScrollBar>
      </Viewport>
      <WindowsBar />
    </Screen>
  </>
);

export default App;
